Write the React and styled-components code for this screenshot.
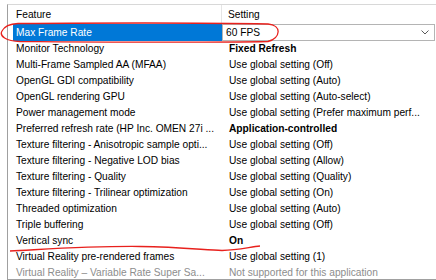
import React from "react";
import styled, { createGlobalStyle } from "styled-components";

const Global = createGlobalStyle`
  html, body { margin: 0; padding: 0; background: #ffffff; }
  body { font-family: "Liberation Sans", Arial, sans-serif; }
`;

const Page = styled.div`
  position: relative;
  width: 436px;
  height: 280px;
  overflow: hidden;
  padding: 4px 0 0 7px;
  box-sizing: border-box;
`;

const ListBox = styled.div`
  height: 276px;
  border-top: 1px solid #d8d8d8;
  border-left: 1px solid #a0a0a0;
  border-bottom: 1px solid #a0a0a0;
  box-sizing: border-box;
  overflow: hidden;
  font-size: 10.2px;
  color: #000;
`;

const Header = styled.div`
  display: grid;
  grid-template-columns: 214px 1fr;
  height: 19px;
  align-items: center;
`;

const HeadCell = styled.div`
  height: 100%;
  display: flex;
  align-items: center;
  padding-left: ${(p) => p.$pad}px;
  border-right: ${(p) => (p.$divider ? "1px solid #e5e5e5" : "none")};
`;

const Row = styled.div`
  display: grid;
  grid-template-columns: 214px 1fr;
  height: 16px;
  align-items: stretch;
  color: ${(p) => (p.$disabled ? "#8d8d8d" : "#000")};
`;

const FeatureCell = styled.div`
  display: flex;
  align-items: center;
  margin-left: 5px;
  padding-left: 3px;
  white-space: nowrap;
  background: ${(p) => (p.$selected ? "#0078d7" : "transparent")};
  color: ${(p) => (p.$selected ? "#fff" : "inherit")};
`;

const SettingCell = styled.div`
  display: flex;
  align-items: center;
  padding-left: 7px;
  white-space: nowrap;
  font-weight: ${(p) => (p.$bold ? 700 : 400)};
`;

const Dropdown = styled.div`
  display: flex;
  align-items: center;
  justify-content: space-between;
  height: 17px;
  margin-right: 1px;
  border: 1px solid #b4b4b4;
  box-sizing: border-box;
  padding: 0 5px 0 3px;
  background: #fff;
`;

const Overlay = styled.svg`
  position: absolute;
  left: 0;
  top: 0;
  pointer-events: none;
`;

const rows = [
  ["Max Frame Rate", "60 FPS", "dropdown"],
  ["Monitor Technology", "Fixed Refresh", "bold"],
  ["Multi-Frame Sampled AA (MFAA)", "Use global setting (Off)"],
  ["OpenGL GDI compatibility", "Use global setting (Auto)"],
  ["OpenGL rendering GPU", "Use global setting (Auto-select)"],
  ["Power management mode", "Use global setting (Prefer maximum perf..."],
  ["Preferred refresh rate (HP Inc. OMEN 27i ...", "Application-controlled", "bold"],
  ["Texture filtering - Anisotropic sample opti...", "Use global setting (Off)"],
  ["Texture filtering - Negative LOD bias", "Use global setting (Allow)"],
  ["Texture filtering - Quality", "Use global setting (Quality)"],
  ["Texture filtering - Trilinear optimization", "Use global setting (On)"],
  ["Threaded optimization", "Use global setting (Auto)"],
  ["Triple buffering", "Use global setting (Off)"],
  ["Vertical sync", "On", "bold"],
  ["Virtual Reality pre-rendered frames", "Use global setting (1)"],
  ["Virtual Reality \u2013 Variable Rate Super Sa...", "Not supported for this application", "disabled"],
];

export default function App() {
  return (
    <>
      <Global />
      <Page>
        <ListBox>
          <Header>
            <HeadCell $pad={8} $divider>Feature</HeadCell>
            <HeadCell $pad={6}>Setting</HeadCell>
          </Header>
          {rows.map(([f, s, kind]) => (
            <Row key={f} $disabled={kind === "disabled"}>
              <FeatureCell $selected={kind === "dropdown"}>{f}</FeatureCell>
              {kind === "dropdown" ? (
                <Dropdown>
                  <span>{s}</span>
                  <svg width="8" height="5" viewBox="0 0 8 5">
                    <path d="M0.5 0.5 L4 4 L7.5 0.5" fill="none" stroke="#5a5a5a" strokeWidth="1" />
                  </svg>
                </Dropdown>
              ) : (
                <SettingCell $bold={kind === "bold"}>{s}</SettingCell>
              )}
            </Row>
          ))}
        </ListBox>
        <Overlay width="436" height="280" viewBox="0 0 436 280">
          <path
            d="M18 23.5 C 90 23, 200 22.5, 268 24 C 282 25, 281 38, 268 41.5 C 200 43, 90 42, 20 41.5 C 6 41, -1 36, 2 31 C 4 27, 9 24, 18 23.5 Z"
            fill="none"
            stroke="#e8211d"
            strokeWidth="1.3"
          />
          <path
            d="M10 251 C 50 249, 90 246, 140 246.5 C 180 247, 205 250, 222 250.5 C 238 250, 250 247, 260 246"
            fill="none"
            stroke="#e8211d"
            strokeWidth="1.3"
          />
        </Overlay>
      </Page>
    </>
  );
}
